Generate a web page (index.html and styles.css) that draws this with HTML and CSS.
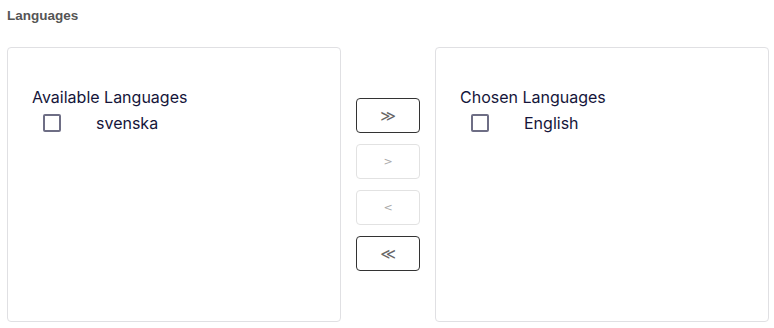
FILE: index.html
```html
<!DOCTYPE html>
<html lang="en">
<head>
    <meta charset="UTF-8">
    <meta name="viewport" content="width=device-width, initial-scale=1.0">
    <title>Languages</title>
    <link rel="stylesheet" href="styles.css">
</head>
<body>
    <h2 class="field-label">Languages</h2>

    <div class="dual-list">
        <div class="list-box">
            <div class="list-title">Available Languages</div>
            <label class="list-item">
                <span class="check"></span>
                <span class="item-text">svenska</span>
            </label>
        </div>

        <div class="list-actions">
            <button class="move-btn">&#8811;</button>
            <button class="move-btn" disabled>&gt;</button>
            <button class="move-btn" disabled>&lt;</button>
            <button class="move-btn">&#8810;</button>
        </div>

        <div class="list-box">
            <div class="list-title">Chosen Languages</div>
            <label class="list-item">
                <span class="check"></span>
                <span class="item-text">English</span>
            </label>
        </div>
    </div>
</body>
</html>
```

FILE: styles.css
```css
body {
    margin: 0;
    padding: 0 0 0 7px;
    font-family: Inter, "Noto Sans", sans-serif;
    background: #fff;
}
.field-label {
    margin: 8px 0 0;
    font-family: "Liberation Sans", Arial, sans-serif;
    font-size: 13.5px;
    line-height: 16px;
    font-weight: 700;
    color: #555;
}
.dual-list {
    display: flex;
    align-items: center;
    margin-top: 23px;
}
.list-box {
    box-sizing: border-box;
    flex-shrink: 0;
    width: 334px;
    height: 275px;
    border: 1px solid #e0e0e3;
    border-radius: 4px;
    padding: 39px 24px 0;
}
.list-title {
    font-size: 16px;
    line-height: 20px;
    color: #15153a;
}
.list-item {
    display: flex;
    align-items: center;
    margin-top: 6px;
    padding-left: 11px;
}
.check {
    box-sizing: border-box;
    width: 18px;
    height: 18px;
    border: 2px solid #6e6e85;
    border-radius: 2px;
}
.item-text {
    margin-left: 35px;
    font-size: 16px;
    line-height: 20px;
    color: #15153a;
}
.list-actions {
    display: flex;
    flex-direction: column;
    align-items: center;
    flex-shrink: 0;
    gap: 11px;
    width: 94px;
}
.move-btn {
    width: 64px;
    height: 35px;
    padding: 0;
    background: #fff;
    border: 1px solid #333;
    border-radius: 4px;
    font-family: "DejaVu Sans", sans-serif;
    font-size: 15px;
    color: #666;
}
.move-btn:disabled {
    border-color: #e2e2e2;
    color: #aaa;
    font-size: 11px;
}
```
